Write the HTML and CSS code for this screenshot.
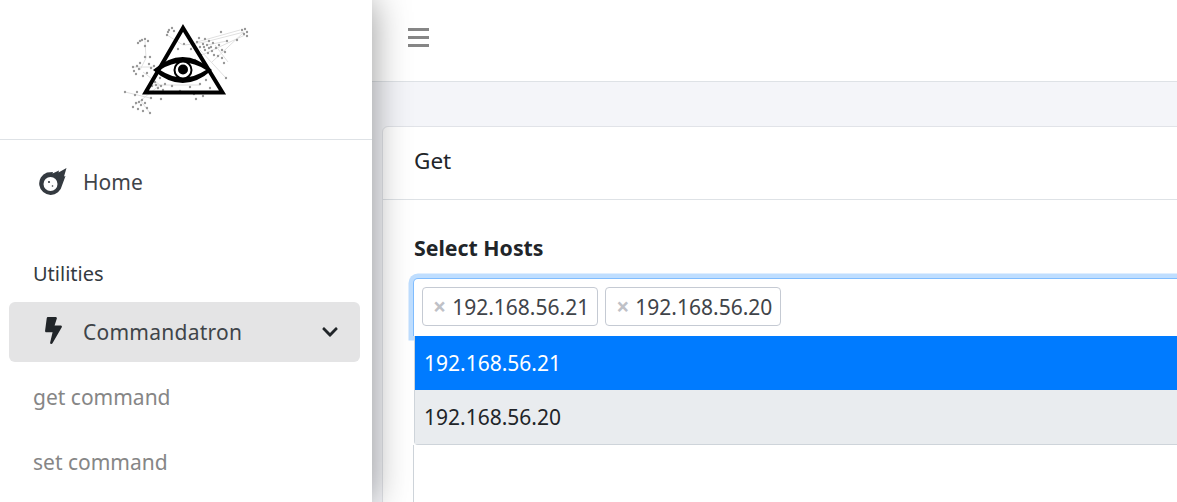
FILE: index.html
```html
<!DOCTYPE html>
<html lang="en">
<head>
    <meta charset="UTF-8">
    <meta name="viewport" content="width=device-width, initial-scale=1.0">
    <title>Commandatron</title>
    <link rel="stylesheet" href="styles.css">
</head>
<body>
    <div class="wrapper">
        <aside class="sidebar">
            <div class="brand">
                <svg class="brand-logo" viewBox="116 20 140 100" width="140" height="100">
                    <path class="logo-lines" d="M145 41L146 58L140 70M167 35L183 45M205 42L244 32L212 62M185 45L205 42M215 45L228 62M143 72L160 85L135 105M150 85L200 85M197 42L240 30M202 55L245 35M133 67L153 67M125 92L150 98M140 100L150 113M207 45L227 41M200 50L226 78"/>
                    <path class="logo-dots" d="M138 43h0M140 41h0M142 40h0M145 39h0M148 41h0M145 46h0M145 57h0M150 57h0M167 35h0M168 32h0M169 30h0M172 28h0M174 31h0M133 67h0M134 71h0M136 74h0M140 63h0M139 69h0M147 73h0M151 68h0M154 66h0M143 76h0M137 66h0M149 64h0M125 92h0M135 95h0M137 92h0M146 90h0M151 98h0M161 99h0M133 107h0M136 103h0M138 109h0M141 105h0M143 111h0M147 108h0M150 113h0M142 100h0M139 102h0M145 103h0M194 94h0M196 99h0M203 96h0M197 42h0M199 38h0M203 44h0M205 39h0M207 45h0M209 41h0M211 47h0M213 43h0M205 50h0M208 53h0M212 51h0M216 48h0M219 45h0M222 50h0M225 52h0M218 56h0M222 58h0M224 63h0M226 78h0M221 32h0M227 41h0M237 40h0M242 30h0M245 29h0M247 32h0M244 34h0M247 36h0M201 55h0M195 60h0M178 49h0M184 44h0M191 49h0M200 47h0M204 47h0M209 48h0M214 55h0M155 82h0M160 78h0M165 84h0M152 86h0M158 88h0M163 90h0M156 85h0M161 86h0M200 84h0M206 80h0M210 88h0M172 86h0M180 91h0M190 87h0"/>
                    <path class="logo-triangle" d="M183 28L145.500 92.500H222.500Z"/>
                    <path class="logo-eye" fill-rule="evenodd" d="M153 70Q183 44 212 70Q183 96 153 70ZM160 70Q183 85 206 70Q183 55 160 70Z"/>
                    <circle class="logo-iris" cx="183" cy="70" r="8.500"/>
                    <circle class="logo-pupil" cx="183" cy="69.500" r="5"/>
                </svg>
            </div>
            <nav class="side-nav">
                <a class="nav-link nav-home" href="#">
                    <svg class="nav-icon icon-meteor" viewBox="0 0 28 28" width="28" height="28">
                        <path class="meteor-body" d="M27.500 0L25 8.500L26.500 8L23 17.500A11.500 11.500 0 1 1 8 4.500L14 4L13.500 5.500L20 2.500L19.500 4.500Z"/>
                        <circle class="meteor-eye" cx="11.500" cy="16" r="7"/>
                        <circle class="meteor-dot" cx="10" cy="14" r="1.100"/>
                        <circle class="meteor-dot" cx="13.500" cy="18" r="0.800"/>
                    </svg>
                    <span>Home</span>
                </a>
                <div class="nav-heading">Utilities</div>
                <a class="nav-link nav-active" href="#">
                    <svg class="nav-icon icon-bolt" viewBox="0 0 320 512" width="17" height="27">
                        <path d="M296 160H180.600l42.600-129.800C227.200 15 215.700 0 200 0H56C44 0 33.800 8.900 32.200 20.800l-32 240C-1.700 275.200 9.500 288 24 288h118.700L96.600 482.500c-3.600 15.200 8 29.500 23.300 29.500 8.400 0 16.400-4.400 20.800-12l176-304c9.300-15.900-2.200-36-20.700-36z"/>
                    </svg>
                    <span class="nav-title">Commandatron</span>
                    <svg class="nav-chevron" viewBox="0 0 448 512" width="16" height="18">
                        <path d="M207.029 381.476L12.686 187.132c-9.373-9.373-9.373-24.569 0-33.941l22.667-22.667c9.357-9.357 24.522-9.375 33.901-.04L224 284.505l154.745-154.021c9.379-9.335 24.544-9.317 33.901.04l22.667 22.667c9.373 9.373 9.373 24.569 0 33.941L240.971 381.476c-9.373 9.372-24.569 9.372-33.942 0z"/>
                    </svg>
                </a>
                <a class="nav-sub" href="#">get command</a>
                <a class="nav-sub" href="#">set command</a>
            </nav>
        </aside>

        <div class="main">
            <div class="topbar">
                <button class="menu-toggle" type="button" aria-label="Toggle menu">
                    <span></span><span></span><span></span>
                </button>
            </div>
            <div class="content">
                <div class="card">
                    <div class="card-header">Get</div>
                    <div class="card-body">
                        <label class="field-label">Select Hosts</label>
                        <div class="select-field">
                            <div class="select-tags">
                                <span class="tag"><span class="tag-remove">×</span>192.168.56.21</span>
                                <span class="tag"><span class="tag-remove">×</span>192.168.56.20</span>
                            </div>
                            <ul class="select-options">
                                <li class="option option-active">192.168.56.21</li>
                                <li class="option option-selected">192.168.56.20</li>
                            </ul>
                            <div class="select-rest"></div>
                        </div>
                    </div>
                </div>
            </div>
        </div>
    </div>
</body>
</html>
```

FILE: styles.css
```css
html, body {
    height: 100%;
    overflow: hidden;
}
body {
    font-family: "Noto Sans", Arial, sans-serif;
    font-size: 21px;
    margin: 0;
    background: #f4f5f9;
    color: #212529;
}
a {
    text-decoration: none;
}
.wrapper {
    display: flex;
    height: 502px;
}

/* sidebar */
.sidebar {
    position: relative;
    z-index: 2;
    flex: 0 0 372px;
    background: #fff;
    box-shadow: 0 0 35px rgba(0, 0, 0, 0.42);
}
.brand {
    display: flex;
    justify-content: center;
    height: 119px;
    padding-top: 20px;
    border-bottom: 1px solid #dee2e6;
}
.brand-logo {
    filter: blur(0.7px);
}
.logo-lines {
    fill: none;
    stroke: #e0e0e0;
    stroke-width: 1;
}
.logo-dots {
    fill: none;
    stroke: #9a9a9a;
    stroke-width: 2.4;
    stroke-linecap: round;
}
.logo-triangle {
    fill: none;
    stroke: #000;
    stroke-width: 4;
    stroke-linejoin: miter;
}
.logo-eye {
    fill: #000;
}
.logo-iris {
    fill: #fff;
    stroke: #000;
    stroke-width: 2;
}
.logo-pupil {
    fill: #000;
}
.side-nav {
    display: flex;
    flex-direction: column;
}
.nav-link {
    display: flex;
    align-items: center;
    color: #3f4449;
    margin: 0 12px 0 9px;
    border-radius: 6px;
}
.nav-home {
    height: 60px;
    margin-top: 12px;
}
.nav-icon {
    flex: none;
}
.icon-meteor {
    margin: 0 16px 0 30px;
}
.meteor-body {
    fill: #343a40;
}
.meteor-eye {
    fill: #fff;
}
.meteor-dot {
    fill: #343a40;
}
.nav-heading {
    color: #343a40;
    font-size: 20px;
    line-height: 26px;
    margin: 49px 0 15px 33px;
}
.nav-active {
    height: 60px;
    background: #e4e4e5;
    margin-bottom: 3px;
}
.nav-title {
    letter-spacing: 0.25px;
}
.icon-bolt {
    fill: #212529;
    margin: -3px 21px 0 36px;
}
.nav-chevron {
    margin-left: auto;
    margin-right: 22px;
    fill: #212529;
}
.nav-sub {
    color: #868686;
    line-height: 65px;
    padding-left: 33px;
}

/* main column */
.main {
    flex: 1;
    min-width: 0;
}
.topbar {
    height: 81px;
    display: flex;
    align-items: center;
    padding-left: 36px;
    background: #fff;
    border-bottom: 1px solid #dee2e6;
}
.menu-toggle {
    display: flex;
    flex-direction: column;
    gap: 5px;
    width: 21px;
    padding: 0;
    margin-top: -7px;
    border: none;
    background: none;
}
.menu-toggle span {
    display: block;
    height: 3px;
    background: #868686;
}
.content {
    padding: 44px 0 0 10px;
}
.card {
    width: 1000px;
    background: #fff;
    border: 1px solid #e1e3e8;
    border-radius: 6px 0 0 6px;
}
.card-header {
    height: 72px;
    line-height: 68px;
    font-size: 22.5px;
    padding-left: 31px;
    border-bottom: 1px solid #dee2e6;
}
.card-body {
    padding: 30px 30px 0;
}
.field-label {
    display: block;
    font-weight: 700;
    font-size: 21.300px;
    line-height: 36px;
    margin: 0 0 12px 1px;
}
.select-field {
    display: flex;
    flex-direction: column;
}
.select-tags {
    display: flex;
    gap: 7px;
    height: 49px;
    padding: 8px 0 0 8px;
    border: 1px solid #80bdff;
    border-bottom: none;
    border-radius: 5px 0 0 0;
    box-shadow: 0 0 0 4.5px #bfdeff;
    background: #fff;
}
.tag {
    display: flex;
    align-items: center;
    height: 37px;
    padding: 0 8px 0 10px;
    border: 1px solid #c5cad3;
    border-radius: 4px;
    color: #3f4449;
}
.tag-remove {
    color: #bfc1c7;
    font-weight: 700;
    font-size: 23px;
    line-height: 1;
    margin-right: 6px;
}
.select-options {
    position: relative;
    list-style: none;
    margin: 0 0 0 1px;
    padding: 0;
    border-left: 1px solid #ced4da;
    border-bottom: 1px solid #ced4da;
    border-radius: 0 0 0 4px;
}
.option {
    height: 54px;
    line-height: 54px;
    padding-left: 9px;
}
.option-active {
    background: #007bff;
    color: #fff;
}
.option-selected {
    background: #e9ecef;
}
.select-rest {
    height: 200px;
    border-left: 1px solid #ced4da;
}
```
